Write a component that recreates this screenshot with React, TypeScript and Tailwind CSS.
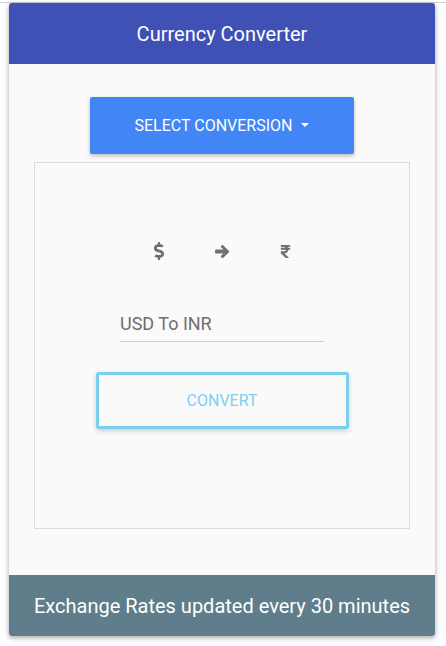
import React from 'react';
import { FaDollarSign, FaRupeeSign } from 'react-icons/fa';

const font = { fontFamily: 'Roboto, "Liberation Sans", sans-serif' };

const ArrowIcon = () => (
  <svg width="15" height="13" viewBox="0 0 15 13" fill="currentColor">
    <path
      d="M1.3 4.6H8.4L6.3 2.5a1.2 1.2 0 0 1 0-1.7l.4-.4a1.2 1.2 0 0 1 1.7 0l5.3 5.3a1.2 1.2 0 0 1 0 1.7L8.4 12.7a1.2 1.2 0 0 1-1.7 0l-.4-.4a1.2 1.2 0 0 1 0-1.7l2.1-2.1H1.3A1.3 1.3 0 0 1 0 7.2V5.9a1.3 1.3 0 0 1 1.3-1.3z"
    />
  </svg>
);

export default function App() {
  return (
    <div className="min-h-[646px] bg-white border-t border-[#d0d0d0] mt-[2px] pt-0" style={font}>
      <div className="mx-[9px] w-[426px] rounded-[3px] overflow-hidden bg-[#fafafa] shadow-[0_2px_4px_rgba(0,0,0,0.25),0_1px_8px_rgba(0,0,0,0.12)]">
        <header className="h-[61px] bg-[#3f51b5] flex items-center justify-center">
          <h1 className="text-white text-[20px] font-normal">Currency Converter</h1>
        </header>

        <main className="h-[511px] px-[25px] pt-[33px] flex flex-col items-center">
          <button className="w-[264px] h-[57px] rounded-[2px] bg-[#4285f4] text-white text-[16px] uppercase flex items-center justify-center gap-[9px] shadow-[0_2px_4px_rgba(0,0,0,0.25)]">
            Select Conversion
            <span className="w-0 h-0 border-l-[4.5px] border-r-[4.5px] border-t-[4px] border-l-transparent border-r-transparent border-t-white mb-[2px]" />
          </button>

          <section className="mt-[8px] w-[376px] h-[367px] border border-[#dcdcdc] flex flex-col items-center">
            <div className="mt-[79px] flex items-center justify-center gap-[43px] text-[#707070]">
              <span className="w-[20px] flex justify-center"><FaDollarSign size={18} /></span>
              <span className="w-[20px] flex justify-center"><ArrowIcon /></span>
              <span className="w-[20px] flex justify-center"><FaRupeeSign size={15} /></span>
            </div>

            <div className="mt-[50px] w-[204px] border-b border-[#cfcfcf] pb-[4px] text-[18px] text-[#6f6f6f]">
              USD To INR
            </div>

            <button className="mt-[30px] w-[253px] h-[57px] rounded-[3px] border-[3px] border-[#7bcfee] bg-[#fafafa] text-[#7dd0ef] text-[16px] uppercase shadow-[0_2px_5px_rgba(0,0,0,0.18)]">
              Convert
            </button>
          </section>
        </main>

        <footer className="h-[61px] bg-[#607d8b] flex items-center justify-center">
          <p className="text-white text-[20px]">Exchange Rates updated every 30 minutes</p>
        </footer>
      </div>
    </div>
  );
}
